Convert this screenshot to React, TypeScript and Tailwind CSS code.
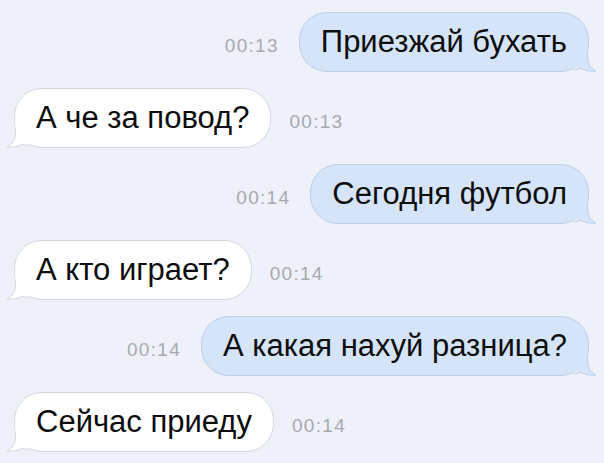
import React from "react";

type Msg = { text: string; time: string; out: boolean };

const messages: Msg[] = [
  { text: "Приезжай бухать", time: "00:13", out: true },
  { text: "А че за повод?", time: "00:13", out: false },
  { text: "Сегодня футбол", time: "00:14", out: true },
  { text: "А кто играет?", time: "00:14", out: false },
  { text: "А какая нахуй разница?", time: "00:14", out: true },
  { text: "Сейчас приеду", time: "00:14", out: false },
];

function Tail({ out }: { out: boolean }) {
  const fill = out ? "#d5e4f8" : "#ffffff";
  const stroke = out ? "#bccde4" : "#d3d6dc";
  return (
    <svg
      width="24"
      height="26"
      viewBox="0 0 24 26"
      className={
        out
          ? "absolute right-[-10px] bottom-[-1px]"
          : "absolute left-[-10px] bottom-[-1px] -scale-x-100"
      }
    >
      <path
        d="M0 0 L13.5 0 L13.5 9 C13.5 17 16 22 22 25 C16 25.5 11 24.5 6 22 L0 22 Z"
        fill={fill}
      />
      <path
        d="M13.5 6 L13.5 9 C13.5 17 16 22 22 25 C16 25.5 11 24.5 6 22 C4 23.2 2 24 0 24.4"
        fill="none"
        stroke={stroke}
        strokeWidth="1"
      />
    </svg>
  );
}

function Row({ m }: { m: Msg }) {
  const time = (
    <span className="text-[19px] tracking-[1.3px] text-[#a6a9b0] mt-[9px]">
      {m.time}
    </span>
  );
  const bubble = (
    <div
      className={
        "relative h-[60px] flex items-center px-[21px] rounded-[28px] border text-[31px] text-[#0d0d0d] " +
        (m.out
          ? "bg-[#d5e4f8] border-[#bccde4]"
          : "bg-white border-[#d3d6dc]")
      }
    >
      <span className="relative z-10 leading-none pb-[2px]">{m.text}</span>
      <Tail out={m.out} />
    </div>
  );
  return m.out ? (
    <div className="flex items-center justify-end gap-[20px] pr-[15px]">
      {time}
      {bubble}
    </div>
  ) : (
    <div className="flex items-center justify-start gap-[18px] pl-[14px]">
      {bubble}
      {time}
    </div>
  );
}

export default function App() {
  return (
    <div
      className="w-[604px] h-[463px] bg-[#eef1fa] overflow-hidden flex flex-col gap-[16px] pt-[12px]"
      style={{ fontFamily: '"Liberation Sans", Arial, sans-serif' }}
    >
      {messages.map((m, i) => (
        <Row key={i} m={m} />
      ))}
    </div>
  );
}
